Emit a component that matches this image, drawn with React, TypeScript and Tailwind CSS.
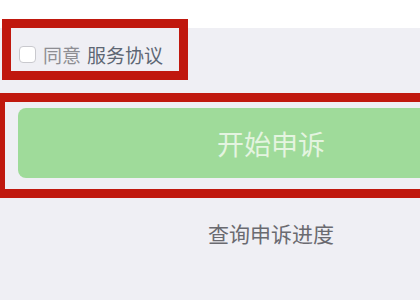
import React from 'react';

const App: React.FC = () => {
    return (
        <div
            className="relative w-[420px] h-[300px] overflow-hidden bg-[#efeff4]"
            style={{ fontFamily: '"Noto Sans CJK SC", "Noto Sans", sans-serif' }}
        >
            <div className="h-[28px] bg-white" />

            <div className="flex items-center h-[52px] pl-[19px]">
                <span className="w-[17px] h-[17px] rounded-[4px] bg-white border border-[#c9c9ce]" />
                <span className="ml-[7px] text-[19px] leading-none text-[#8e8e93]">同意</span>
                <span className="ml-[6px] text-[19px] leading-none text-[#5d6673]">服务协议</span>
            </div>

            <button className="mt-[28px] ml-[18px] w-[506px] h-[70px] rounded-[8px] bg-[#9fdb9a] text-[27px] leading-none text-[#e4f4e0] flex items-center justify-center">
                开始申诉
            </button>

            <div className="mt-[41px] ml-[18px] w-[506px] text-center text-[21px] leading-[28px] text-[#6a6a70]">
                查询申诉进度
            </div>

            {/* annotation frames */}
            <div className="absolute left-[2px] top-[19px] w-[186px] h-[61px] border-[9px] border-[#c0180e]" />
            <div className="absolute left-[-4px] top-[93px] w-[440px] h-[105px] border-[9px] border-[#c0180e]" />
        </div>
    );
};

export default App;
